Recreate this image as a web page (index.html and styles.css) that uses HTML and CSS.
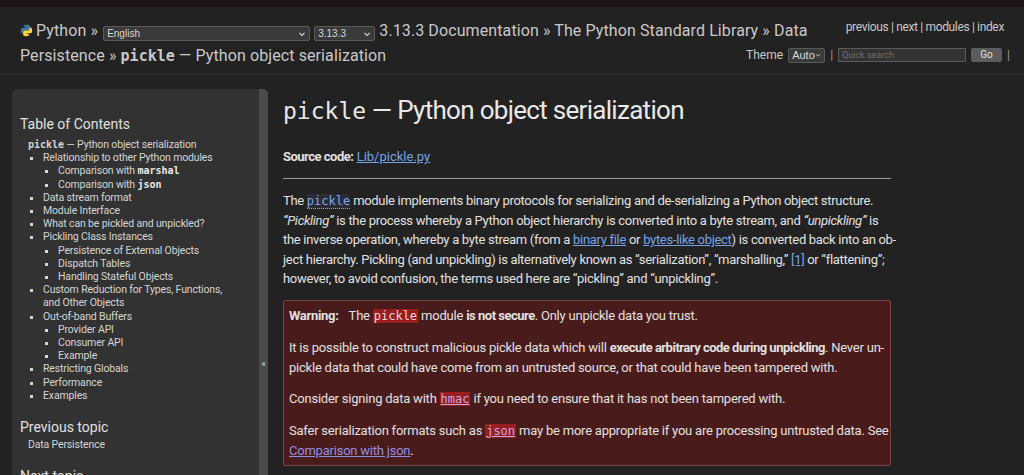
FILE: index.html
```html
<!DOCTYPE html>
<html lang="en">
<head>
<meta charset="utf-8">
<title>pickle — Python object serialization</title>
<link rel="stylesheet" href="styles.css">
</head>
<body>
<div class="topbar"></div>
<header class="related">
  <div class="navlinks"><a href="#">previous</a> | <a href="#">next</a> | <a href="#">modules</a> | <a href="#">index</a></div>
  <div class="searchrow">
    <span>Theme</span>
    <span class="select theme">Auto<svg class="chev" viewBox="0 0 8 8"><path d="M1.5 3l2.5 2.5L6.5 3" fill="none" stroke="#ccc" stroke-width="1.2"/></svg></span>
    <span class="sep">|</span>
    <span class="search">Quick search</span>
    <span class="go">Go</span>
    <span class="sep">|</span>
  </div>
  <div class="crumbs">
    <svg class="logo" viewBox="0 0 16 16" aria-hidden="true"><path fill="#3b77a8" d="M7.9 1C4.6 1 4.8 2.4 4.8 2.4V4h3.2v.5H3.5S1 4.2 1 8.1s2.1 3.7 2.1 3.7h1.3V10s-.1-2.1 2.1-2.1h3.6s2 0 2-1.9V2.9S12.4 1 7.9 1zM6 2.1a.6.6 0 1 1 0 1.2.6.6 0 0 1 0-1.2z"/><path fill="#ffd43b" d="M8.1 15c3.3 0 3.1-1.4 3.1-1.4V12H8v-.5h4.5S15 11.8 15 7.9s-2.1-3.7-2.1-3.7h-1.3V6s.1 2.1-2.1 2.1H5.9s-2 0-2 1.9v3.1S3.6 15 8.1 15zM10 13.9a.6.6 0 1 1 0-1.2.6.6 0 0 1 0 1.2z"/></svg><a class="crumb" href="#">Python</a> »
    <span class="select lang">English<svg class="chev" viewBox="0 0 8 8"><path d="M1.5 3l2.5 2.5L6.5 3" fill="none" stroke="#ccc" stroke-width="1.2"/></svg></span>
    <span class="select ver">3.13.3<svg class="chev" viewBox="0 0 8 8"><path d="M1.5 3l2.5 2.5L6.5 3" fill="none" stroke="#ccc" stroke-width="1.2"/></svg></span>
    <a class="crumb" href="#">3.13.3 Documentation</a> » <a class="crumb" href="#">The Python Standard Library</a> » <a class="crumb" href="#">Data Persistence</a> » <a class="crumb" href="#"><code class="tt">pickle</code> — Python object serialization</a>
  </div>
</header>
<div class="document">
  <aside class="sidebar">
    <div class="sidebar-inner">
      <h3>Table of Contents</h3>
      <ul class="toc">
        <li><a href="#"><code class="tt">pickle</code> — Python object serialization</a>
          <ul>
            <li><a href="#">Relationship to other Python modules</a>
              <ul>
                <li><a href="#">Comparison with <code class="tt b">marshal</code></a></li>
                <li><a href="#">Comparison with <code class="tt b">json</code></a></li>
              </ul>
            </li>
            <li><a href="#">Data stream format</a></li>
            <li><a href="#">Module Interface</a></li>
            <li><a href="#">What can be pickled and unpickled?</a></li>
            <li><a href="#">Pickling Class Instances</a>
              <ul>
                <li><a href="#">Persistence of External Objects</a></li>
                <li><a href="#">Dispatch Tables</a></li>
                <li><a href="#">Handling Stateful Objects</a></li>
              </ul>
            </li>
            <li><a href="#">Custom Reduction for Types, Functions, and Other Objects</a></li>
            <li><a href="#">Out-of-band Buffers</a>
              <ul>
                <li><a href="#">Provider API</a></li>
                <li><a href="#">Consumer API</a></li>
                <li><a href="#">Example</a></li>
              </ul>
            </li>
            <li><a href="#">Restricting Globals</a></li>
            <li><a href="#">Performance</a></li>
            <li><a href="#">Examples</a></li>
          </ul>
        </li>
      </ul>
      <h4>Previous topic</h4>
      <p class="topic"><a href="#">Data Persistence</a></p>
      <h4>Next topic</h4>
      <p class="topic"><a href="#"><code class="tt">copyreg</code> — Register pickle support functions</a></p>
    </div>
    <div class="collapse">«</div>
  </aside>
  <main class="body">
    <h1><code class="tt">pickle</code> — Python object serialization</h1>
    <p class="src"><strong>Source code:</strong> <a class="link" href="#">Lib/pickle.py</a></p>
    <hr>
    <p class="para">The <a class="xref" href="#"><code>pickle</code></a> module implements binary protocols for serializing and de-serializing a Python object structure.<br><em>“Pickling”</em> is the process whereby a Python object hierarchy is converted into a byte stream, and <em>“unpickling”</em> is<br>the inverse operation, whereby a byte stream (from a <a class="link" href="#">binary file</a> or <a class="link" href="#">bytes-like object</a>) is converted back into an ob-<br>ject hierarchy. Pickling (and unpickling) is alternatively known as “serialization”, “marshalling,” <a class="link" href="#">[1]</a> or “flattening”;<br>however, to avoid confusion, the terms used here are “pickling” and “unpickling”.</p>
    <div class="warning">
      <p class="wp"><span class="wtitle">Warning:</span>The <code class="red">pickle</code> module <strong>is not secure</strong>. Only unpickle data you trust.</p>
      <p class="wp">It is possible to construct malicious pickle data which will <strong>execute arbitrary code during unpickling</strong>. Never un-<br>pickle data that could have come from an untrusted source, or that could have been tampered with.</p>
      <p class="wp">Consider signing data with <a class="redlink" href="#"><code>hmac</code></a> if you need to ensure that it has not been tampered with.</p>
      <p class="wp">Safer serialization formats such as <a class="redlink" href="#"><code>json</code></a> may be more appropriate if you are processing untrusted data. See<br><a class="vlink" href="#">Comparison with json</a>.</p>
    </div>
  </main>
</div>
</body>
</html>
```
FILE: styles.css
```css
html, body {
  height: 475px;
  overflow: hidden;
}
body {
  margin: 0;
  background: #222222;
  color: #dddddd;
  font-family: Roboto, "Noto Sans", sans-serif;
}
a { color: inherit; text-decoration: none; }
.tt {
  font-family: "DejaVu Sans Mono", "Liberation Mono", monospace;
  letter-spacing: 0;
}
.topbar {
  height: 7px;
  background: #1d1216;
}
.related {
  height: 68px;
  box-sizing: border-box;
  border-bottom: 1px solid #2f2f2f;
  padding: 11px 14px 0 20px;
  color: #c8c8c8;
}
.navlinks {
  float: right;
  font-size: 12px;
  letter-spacing: -0.35px;
  line-height: 21px;
  padding-right: 6px;
  margin: -1px 0 6px 0;
}
.searchrow {
  float: right;
  clear: right;
  display: flex;
  align-items: center;
  gap: 5px;
  margin: 1px 0 0 20px;
  height: 20px;
  font-size: 12px;
}
.searchrow .sep { color: #999; }
.crumbs {
  font-size: 16px;
  line-height: 25px;
  letter-spacing: 0.1px;
}
.crumbs .tt { font-size: 15px; font-weight: bold; }
.logo {
  width: 13px;
  height: 13px;
  vertical-align: -1px;
  margin-right: 3px;
}
.select {
  display: inline-flex;
  align-items: center;
  justify-content: space-between;
  box-sizing: border-box;
  height: 15px;
  padding: 0 3px;
  background: #3a3a3a;
  border: 1px solid #5a5a5a;
  border-radius: 2px;
  font-family: "Liberation Sans", Arial, sans-serif;
  font-size: 10px;
  letter-spacing: 0;
  color: #d8d8d8;
  vertical-align: -1px;
}
.select.lang { width: 207px; margin-left: 1px; }
.select.ver { width: 61px; }
.select.theme { width: 37px; font-size: 11px; }
.chev { width: 8px; height: 8px; }
.search {
  box-sizing: border-box;
  width: 128px;
  height: 14px;
  border: 1px solid #5a5a5a;
  background: #333;
  color: #6f6f6f;
  font-size: 9px;
  text-align: left;
  padding-left: 3px;
  line-height: 12px;
}
.go {
  box-sizing: border-box;
  width: 31px;
  height: 14px;
  background: #5c5c5c;
  color: #e0e0e0;
  font-size: 10px;
  line-height: 14px;
  text-align: center;
  border-radius: 2px;
}
.document {
  display: flex;
  align-items: flex-start;
  padding: 14px 0 0 12px;
}
.sidebar {
  display: flex;
  width: 256px;
  flex: none;
  height: 550px;
  background: #323232;
  border-radius: 5px 5px 0 0;
  overflow: hidden;
}
.sidebar-inner {
  flex: 1;
  padding: 26px 20px 0 8px;
  font-size: 10.5px;
  line-height: 13.2px;
  letter-spacing: -0.15px;
  color: #d4d4d4;
}
.sidebar h3 {
  margin: 0 0 5px;
  font-size: 14px;
  line-height: 18px;
  font-weight: normal;
  letter-spacing: 0;
  color: #e0e0e0;
}
.sidebar h4 {
  margin: 16px 0 2px;
  font-size: 14px;
  line-height: 18px;
  font-weight: normal;
  letter-spacing: 0;
  color: #e0e0e0;
}
.toc, .toc ul {
  margin: 0;
  padding: 0;
  list-style: none;
}
.toc { padding-left: 8px; }
.toc ul { padding-left: 15px; list-style: square; }
.toc .tt { font-size: 10px; font-weight: bold; }
.toc .tt.b { color: #e8e8e8; }
.topic { margin: 0; padding-left: 8px; }
.collapse {
  width: 9px;
  background: #4a4a4a;
  color: #ddd;
  font-size: 9px;
  display: flex;
  align-items: center;
  justify-content: center;
}
.body {
  width: 608px;
  margin-left: 15px;
  padding-top: 6px;
  font-size: 13px;
  color: #e0e0e0;
}
h1 {
  margin: 0 0 17px;
  font-size: 26px;
  line-height: 31px;
  font-weight: normal;
  letter-spacing: -0.7px;
  color: #e8e8e8;
}
h1 .tt { font-size: 23px; }
.src { margin: 0; line-height: 25px; }
.src strong { letter-spacing: -0.5px; }
.link { color: #74a4e6; text-decoration: underline; }
hr {
  border: 0;
  border-top: 1px solid #9a9a9a;
  margin: 9px 0 12px;
}
.para {
  margin: 0 0 12px;
  line-height: 19.2px;
  letter-spacing: -0.3px;
  white-space: nowrap;
}
.xref code {
  font-family: "DejaVu Sans Mono", "Liberation Mono", monospace;
  font-size: 12px;
  letter-spacing: 0;
  color: #7fa8e8;
  background: #2b2b33;
  border-bottom: 1px dotted #7fa8e8;
}
.warning {
  background: #4a1b1b;
  border: 1px solid #7a4444;
  border-radius: 2px;
  padding: 5px 5px 4px;
}
.wp {
  margin: 0 0 11.5px;
  line-height: 19.5px;
  letter-spacing: -0.22px;
  white-space: nowrap;
}
.wp strong { letter-spacing: -0.5px; }
.wp:last-child { margin-bottom: 0; }
.wtitle {
  font-weight: bold;
  margin-right: 10px;
  letter-spacing: -0.3px;
}
code.red, .redlink code {
  font-family: "DejaVu Sans Mono", "Liberation Mono", monospace;
  font-size: 12px;
  letter-spacing: 0;
  background: #9a1e1e;
  color: #f4d4d4;
  padding: 0 1px;
}
.redlink code {
  color: #c7a6e6;
  text-decoration: underline;
}
.vlink { color: #9090e0; text-decoration: underline; }
```
